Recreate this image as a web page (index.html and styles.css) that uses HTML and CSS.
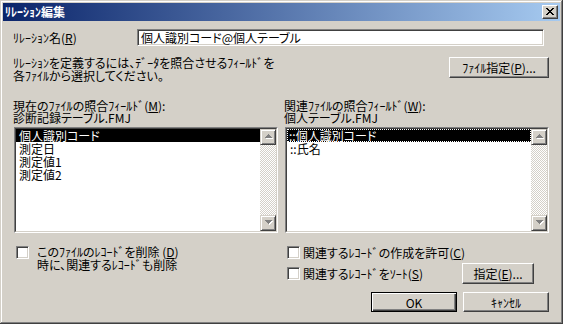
FILE: index.html
```html
<!DOCTYPE html>
<html lang="ja">
<head>
<meta charset="utf-8">
<title>ﾘﾚｰｼｮﾝ編集</title>
<link rel="stylesheet" href="styles.css">
</head>
<body>
<div class="window">
  <div class="titlebar">
    <span class="title">ﾘﾚｰｼｮﾝ編集</span>
    <div class="close">
      <svg width="8" height="7" viewBox="0 0 8 7" shape-rendering="crispEdges"><path fill="#000" d="M0 0h2v1H0zM6 0h2v1H6zM1 1h2v1H1zM5 1h2v1H5zM2 2h4v1H2zM3 3h2v1H3zM2 4h4v1H2zM1 5h2v1H1zM5 5h2v1H5zM0 6h2v1H0zM6 6h2v1H6z"/></svg>
    </div>
  </div>
  <div class="content">
    <div class="row-name">
      <div class="name-label">ﾘﾚｰｼｮﾝ名(<u>R</u>)</div>
      <div class="textbox">個人識別コード@個人テーブル</div>
    </div>
    <div class="row-desc">
      <div class="desc">ﾘﾚｰｼｮﾝを定義するには、ﾃﾞｰﾀを照合させるﾌｨｰﾙﾄﾞを<br>各ﾌｧｲﾙから選択してください。</div>
      <div class="btn btn-file">ﾌｧｲﾙ指定(<u>P</u>)...</div>
    </div>
    <div class="cols lists">
      <div class="col">
        <div class="col-label">現在のﾌｧｲﾙの照合ﾌｨｰﾙﾄﾞ(<u>M</u>):<br>診断記録テーブル.FMJ</div>
        <div class="listbox">
          <div class="listbox-inner">
            <ul class="items">
              <li class="sel">個人識別コード</li>
              <li>測定日</li>
              <li>測定値1</li>
              <li>測定値2</li>
            </ul>
            <div class="scrollbar">
              <div class="sbtn"><svg width="8" height="5" viewBox="0 0 8 5" shape-rendering="crispEdges"><path fill="#fff" d="M4 1h1v1H4zM3 2h3v1H3zM2 3h5v1H2zM1 4h7v1H1z"/><path fill="#808080" d="M3 0h1v1H3zM2 1h3v1H2zM1 2h5v1H1zM0 3h7v1H0z"/></svg></div>
              <div class="track"></div>
              <div class="sbtn"><svg width="8" height="5" viewBox="0 0 8 5" shape-rendering="crispEdges"><path fill="#fff" d="M1 1h7v1H1zM2 2h5v1H2zM3 3h3v1H3zM4 4h1v1H4z"/><path fill="#808080" d="M0 0h7v1H0zM1 1h5v1H1zM2 2h3v1H2zM3 3h1v1H3z"/></svg></div>
            </div>
          </div>
        </div>
      </div>
      <div class="col">
        <div class="col-label">関連ﾌｧｲﾙの照合ﾌｨｰﾙﾄﾞ(<u>W</u>):<br>個人テーブル.FMJ</div>
        <div class="listbox">
          <div class="listbox-inner">
            <ul class="items">
              <li class="sel focus">::個人識別コード</li>
              <li>::氏名</li>
            </ul>
            <div class="scrollbar">
              <div class="sbtn"><svg width="8" height="5" viewBox="0 0 8 5" shape-rendering="crispEdges"><path fill="#fff" d="M4 1h1v1H4zM3 2h3v1H3zM2 3h5v1H2zM1 4h7v1H1z"/><path fill="#808080" d="M3 0h1v1H3zM2 1h3v1H2zM1 2h5v1H1zM0 3h7v1H0z"/></svg></div>
              <div class="track"></div>
              <div class="sbtn"><svg width="8" height="5" viewBox="0 0 8 5" shape-rendering="crispEdges"><path fill="#fff" d="M1 1h7v1H1zM2 2h5v1H2zM3 3h3v1H3zM4 4h1v1H4z"/><path fill="#808080" d="M0 0h7v1H0zM1 1h5v1H1zM2 2h3v1H2zM3 3h1v1H3z"/></svg></div>
            </div>
          </div>
        </div>
      </div>
    </div>
    <div class="cols bottom">
      <div class="col">
        <div class="check-left">
          <div class="cb"></div>
          <div class="check-left-text">このﾌｧｲﾙのﾚｺｰﾄﾞを削除 (<u>D</u>)<br>時に、関連するﾚｺｰﾄﾞも削除</div>
        </div>
      </div>
      <div class="col">
        <div class="check-row row-a">
          <div class="cb"></div>
          <span class="check-text">関連するﾚｺｰﾄﾞの作成を許可(<u>C</u>)</span>
        </div>
        <div class="check-row row-b">
          <div class="cb"></div>
          <span class="check-text">関連するﾚｺｰﾄﾞをｿｰﾄ(<u>S</u>)</span>
          <div class="btn btn-spec">指定(<u>E</u>)...</div>
        </div>
        <div class="row-c">
          <div class="btn btn-ok default">OK</div>
          <div class="btn btn-cancel">ｷｬﾝｾﾙ</div>
        </div>
      </div>
    </div>
  </div>
</div>
</body>
</html>
```
FILE: styles.css
```css
* { box-sizing: border-box; }
html, body { margin: 0; padding: 0; }
body {
  width: 563px;
  height: 324px;
  overflow: hidden;
  background: #d4d0c8;
  font-family: "Noto Sans CJK JP", "Noto Sans", sans-serif;
  font-size: 12px;
  font-feature-settings: "palt";
  color: #000;
}
u { text-decoration: underline; text-underline-offset: 1px; }

.window {
  width: 563px;
  height: 324px;
  padding: 3px;
  background: #d4d0c8;
  box-shadow: inset -1px -1px #404040, inset 1px 1px #d4d0c8, inset -2px -2px #808080, inset 2px 2px #ffffff;
  display: flex;
  flex-direction: column;
}

.titlebar {
  height: 18px;
  background: linear-gradient(to right, #0a246a, #a6caf0);
  display: flex;
  align-items: center;
  padding: 0 2px 0 2px;
}
.title {
  color: #fff;
  font-weight: bold;
  font-size: 12px;
  line-height: 14px;
  flex: 1;
}
.close {
  width: 16px;
  height: 14px;
  background: #d4d0c8;
  border: 1px solid;
  border-color: #fff #404040 #404040 #fff;
  box-shadow: inset -1px -1px #808080;
  display: flex;
  align-items: center;
  justify-content: center;
  padding: 0 1px 1px 0;
}
.close svg { display: block; }

.content {
  padding: 8px 11px 0 10px;
  display: flex;
  flex-direction: column;
}

.row-name {
  display: flex;
  height: 17px;
  align-items: center;
}
.name-label {
  width: 124px;
  line-height: 13px;
}
.textbox {
  width: 407px;
  height: 17px;
  background: #fff;
  border: 1px solid;
  border-color: #808080 #fff #fff #808080;
  box-shadow: inset 1px 1px #404040, inset -1px -1px #d4d0c8;
  padding: 1px 2px 0 3px;
  line-height: 14px;
  font-size: 12px;
  white-space: nowrap;
}

.row-desc {
  display: flex;
  margin-top: 10px;
  align-items: flex-start;
}
.desc {
  line-height: 13px;
  flex: 1;
  white-space: nowrap;
}

.btn {
  background: #d4d0c8;
  border: 1px solid;
  border-color: #fff #404040 #404040 #fff;
  box-shadow: inset -1px -1px #808080;
  display: flex;
  align-items: center;
  justify-content: center;
  line-height: 13px;
  white-space: nowrap;
}
.btn-file {
  width: 100px;
  height: 21px;
  margin-top: 1px;
}

.cols {
  display: grid;
  grid-template-columns: 266px 265px;
  column-gap: 5px;
}
.lists { margin-top: 18px; }
.col-label {
  line-height: 12px;
  white-space: nowrap;
}
.listbox {
  margin-top: 3px;
  margin-left: 1px;
  width: 264px;
  height: 106px;
  border: 1px solid;
  border-color: #808080 #fff #fff #808080;
}
.listbox-inner {
  height: 100%;
  border: 1px solid;
  border-color: #404040 #d4d0c8 #d4d0c8 #404040;
  display: flex;
}
.items {
  list-style: none;
  margin: 0;
  padding: 0;
  flex: 1;
  background: #fff;
}
.items li {
  height: 13px;
  line-height: 13px;
  padding-left: 3px;
  white-space: nowrap;
}
.items li.sel {
  background: #000;
  color: #fff;
}
.items li.focus {
  outline: 1px dotted #fff;
  outline-offset: -1px;
  padding-left: 2px;
}
.scrollbar {
  width: 16px;
  display: flex;
  flex-direction: column;
}
.sbtn {
  width: 16px;
  height: 16px;
  background: #d4d0c8;
  border: 1px solid;
  border-color: #d4d0c8 #404040 #404040 #d4d0c8;
  box-shadow: inset 1px 1px #fff, inset -1px -1px #808080;
  display: flex;
  align-items: center;
  justify-content: center;
  padding: 0 0 1px 1px;
}
.sbtn svg { display: block; }
.track {
  flex: 1;
  background: repeating-conic-gradient(#ffffff 0 25%, #d4d0c8 0 50%) 0 0 / 2px 2px;
}

.bottom { margin-top: 10px; }
.cb {
  width: 13px;
  height: 13px;
  flex: none;
  background: #fff;
  border: 1px solid;
  border-color: #808080 #fff #fff #808080;
  box-shadow: inset 1px 1px #404040, inset -1px -1px #d4d0c8;
}
.check-left {
  display: flex;
  align-items: flex-start;
  padding-left: 3px;
}
.check-left .cb { margin-top: 3px; }
.check-left-text {
  margin-left: 8px;
  margin-top: 2px;
  line-height: 13px;
  white-space: nowrap;
}
.check-row {
  display: flex;
  align-items: center;
  padding-left: 3px;
}
.row-a { height: 16px; margin-top: 1px; }
.row-b { height: 21px; margin-top: 3px; }
.check-text {
  margin-left: 3px;
  line-height: 13px;
  white-space: nowrap;
}
.btn-spec {
  width: 72px;
  height: 21px;
  margin-left: auto;
  margin-right: 15px;
}
.row-c {
  display: flex;
  justify-content: flex-end;
  gap: 6px;
  margin-top: 8px;
}
.btn-ok, .btn-cancel {
  width: 86px;
  height: 20px;
}
.btn.default {
  border: 1px solid #000;
  box-shadow: inset 1px 1px #fff, inset -1px -1px #404040, inset -2px -2px #808080;
}
```
